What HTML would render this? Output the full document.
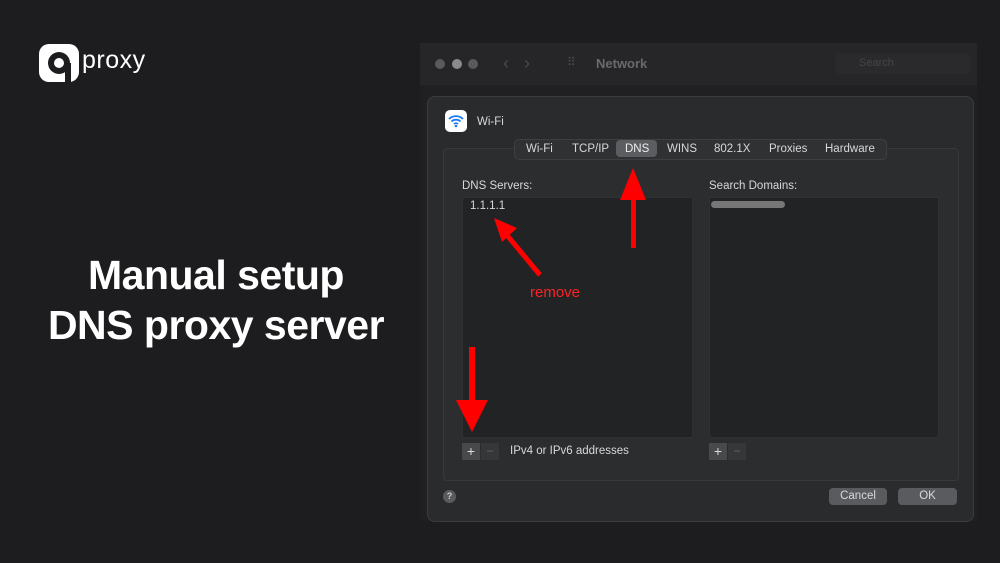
<!DOCTYPE html><html><head><style>
body{margin:0;width:1000px;height:563px;background:#1d1d1f;font-family:"Liberation Sans",sans-serif;position:relative;overflow:hidden}
.a{position:absolute}
.t{color:#d8d8d8;font-size:11.5px}
</style></head><body>
<svg class="a" style="left:39px;top:44px" width="42" height="40" viewBox="0 0 42 40"><rect x="0" y="0" width="40" height="38" rx="10" fill="#fff"/><circle cx="20" cy="19" r="11" fill="#1d1d1f"/><circle cx="20" cy="19" r="5" fill="#fff"/><rect x="26" y="19" width="6" height="20" fill="#1d1d1f"/></svg>
<div class="a" style="left:82px;top:46px;color:#fff;font-size:25px;letter-spacing:0.5px">proxy</div>
<div class="a" style="left:0;width:432px;top:250px;text-align:center;color:#fff;font-size:41px;font-weight:bold;line-height:50px;letter-spacing:-0.5px">Manual setup<br>DNS proxy server</div>
<div class="a" style="left:420px;top:43px;width:557px;height:478px;background:#202022"></div>
<div class="a" style="left:420px;top:43px;width:557px;height:42px;background:#262628"></div>
<div class="a" style="left:435px;top:59px;width:10px;height:10px;border-radius:5px;background:#5a5a5c"></div>
<div class="a" style="left:452px;top:59px;width:10px;height:10px;border-radius:5px;background:#8a8a8c"></div>
<div class="a" style="left:468px;top:59px;width:10px;height:10px;border-radius:5px;background:#5a5a5c"></div>
<div class="a" style="left:503px;top:53px;color:#4a4a4c;font-size:18px">‹ &nbsp; ›</div>
<div class="a" style="left:567px;top:55px;color:#4a4a4c;font-size:12px">⠿</div>
<div class="a" style="left:596px;top:56px;color:#6a6a6c;font-size:13px;font-weight:bold">Network</div>
<div class="a" style="left:835px;top:53px;width:135px;height:21px;border-radius:5px;background:#2a2a2c;color:#454547;font-size:11px;line-height:21px;text-indent:24px">Search</div>
<div class="a" style="left:427px;top:96px;width:545px;height:424px;border:1px solid #3c3c3e;border-radius:8px;background:#2a2b2d"></div>
<div class="a" style="left:445px;top:110px;width:22px;height:22px;border-radius:5px;background:#fff"></div>
<svg class="a" style="left:447px;top:113px" width="18" height="16" viewBox="0 0 18 16"><path d="M2 6a10 10 0 0 1 14 0M4.5 8.5a6.5 6.5 0 0 1 9 0M7 11a3 3 0 0 1 4 0" stroke="#1a7cf5" stroke-width="1.8" fill="none"/><circle cx="9" cy="13" r="1.3" fill="#1a7cf5"/></svg>
<div class="a t" style="left:477px;top:116px">Wi-Fi</div>
<div class="a" style="left:443px;top:148px;width:514px;height:331px;border:1px solid #38393b;border-radius:4px;background:#2c2d2f"></div>
<div class="a" style="left:514px;top:139px;width:371px;height:19px;border:1px solid #3e3f41;border-radius:5px;background:#303133"></div>
<div class="a" style="left:616px;top:140px;width:41px;height:17px;border-radius:4px;background:#5c5d60"></div>
<div class="a t" style="left:526px;top:143px">Wi-Fi</div>
<div class="a t" style="left:572px;top:143px">TCP/IP</div>
<div class="a t" style="left:625px;top:143px;color:#eee">DNS</div>
<div class="a t" style="left:667px;top:143px">WINS</div>
<div class="a t" style="left:714px;top:143px">802.1X</div>
<div class="a t" style="left:769px;top:143px">Proxies</div>
<div class="a t" style="left:825px;top:143px">Hardware</div>
<div class="a t" style="left:462px;top:180px">DNS Servers:</div>
<div class="a t" style="left:709px;top:180px">Search Domains:</div>
<div class="a" style="left:462px;top:197px;width:229px;height:239px;background:#222325;border:1px solid #303133"></div>
<div class="a" style="left:709px;top:197px;width:228px;height:239px;background:#222325;border:1px solid #303133"></div>
<div class="a t" style="left:470px;top:200px">1.1.1.1</div>
<div class="a" style="left:711px;top:201px;width:74px;height:7px;border-radius:4px;background:#777"></div>
<div class="a" style="left:462px;top:443px;width:18px;height:17px;background:#48494b;color:#ddd;font-size:14px;line-height:17px;text-align:center">+</div>
<div class="a" style="left:481px;top:443px;width:18px;height:17px;background:#363739;color:#666;font-size:12px;line-height:17px;text-align:center">−</div>
<div class="a t" style="left:510px;top:445px">IPv4 or IPv6 addresses</div>
<div class="a" style="left:709px;top:443px;width:18px;height:17px;background:#48494b;color:#ddd;font-size:14px;line-height:17px;text-align:center">+</div>
<div class="a" style="left:728px;top:443px;width:18px;height:17px;background:#363739;color:#666;font-size:12px;line-height:17px;text-align:center">−</div>
<div class="a" style="left:443px;top:490px;width:13px;height:13px;border-radius:7px;background:#5a5b5e;color:#ccc;font-size:9px;line-height:13px;text-align:center;font-weight:bold">?</div>
<div class="a t" style="left:829px;top:488px;width:58px;height:17px;border-radius:4px;background:#5a5b5e;text-align:center;line-height:17px">Cancel</div>
<div class="a t" style="left:898px;top:488px;width:59px;height:17px;border-radius:4px;background:#5a5b5e;text-align:center;line-height:17px">OK</div>
<svg class="a" style="left:0;top:0" width="1000" height="563"><g fill="#f00" stroke="#f00"><rect x="631" y="198" width="5" height="50" stroke="none"/><polygon points="620,200 633,168 646,200" stroke="none"/><rect x="469" y="347" width="6" height="55" stroke="none"/><polygon points="456,400 472,432 488,400" stroke="none"/><line x1="540" y1="275" x2="506" y2="234" stroke-width="5"/><polygon points="494,218 517,228 502,242" stroke="none"/></g></svg>
<div class="a" style="left:530px;top:284px;color:#f22;font-size:15px">remove</div>
</body></html>
